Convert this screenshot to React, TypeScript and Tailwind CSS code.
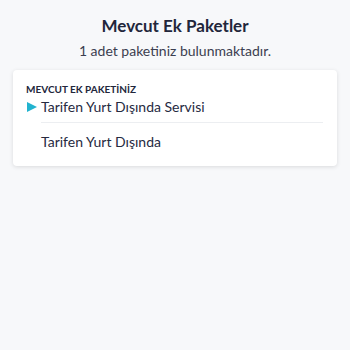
export default function App() {
  return (
    <div className="min-h-[350px] w-[350px] bg-[#f7f8fa] font-['Lato',sans-serif] text-[#262a3f]">
      <div className="pt-[15px] text-center">
        <h1 className="text-[17px] font-bold leading-[22px] text-[#22263b]">Mevcut Ek Paketler</h1>
        <p className="mt-[4px] text-[14px] leading-[20px] text-[#3b3e50]">1 adet paketiniz bulunmaktadır.</p>
      </div>
      <div className="mx-[13px] mt-[9px] rounded-[4px] bg-white px-[13px] pb-[14px] pt-[12px] shadow-[0_1px_4px_rgba(0,0,0,0.12)]">
        <div className="text-[10px] font-bold leading-[14px] text-[#22263b]">MEVCUT EK PAKETİNİZ</div>
        <div className="mt-[1px] flex items-center">
          <svg width="12" height="12" viewBox="0 0 12 12" className="mr-[3px]">
            <path d="M1 1 L11 6 L1 11 Z" fill="#22b3cf" />
          </svg>
          <span className="text-[14px] leading-[20px]">Tarifen Yurt Dışında Servisi</span>
        </div>
        <div className="ml-[15px] mr-[1px] mt-[5px] h-px bg-[#eceef1]" />
        <div className="ml-[15px] mt-[9px] text-[14px] leading-[20px]">Tarifen Yurt Dışında</div>
      </div>
    </div>
  );
}
